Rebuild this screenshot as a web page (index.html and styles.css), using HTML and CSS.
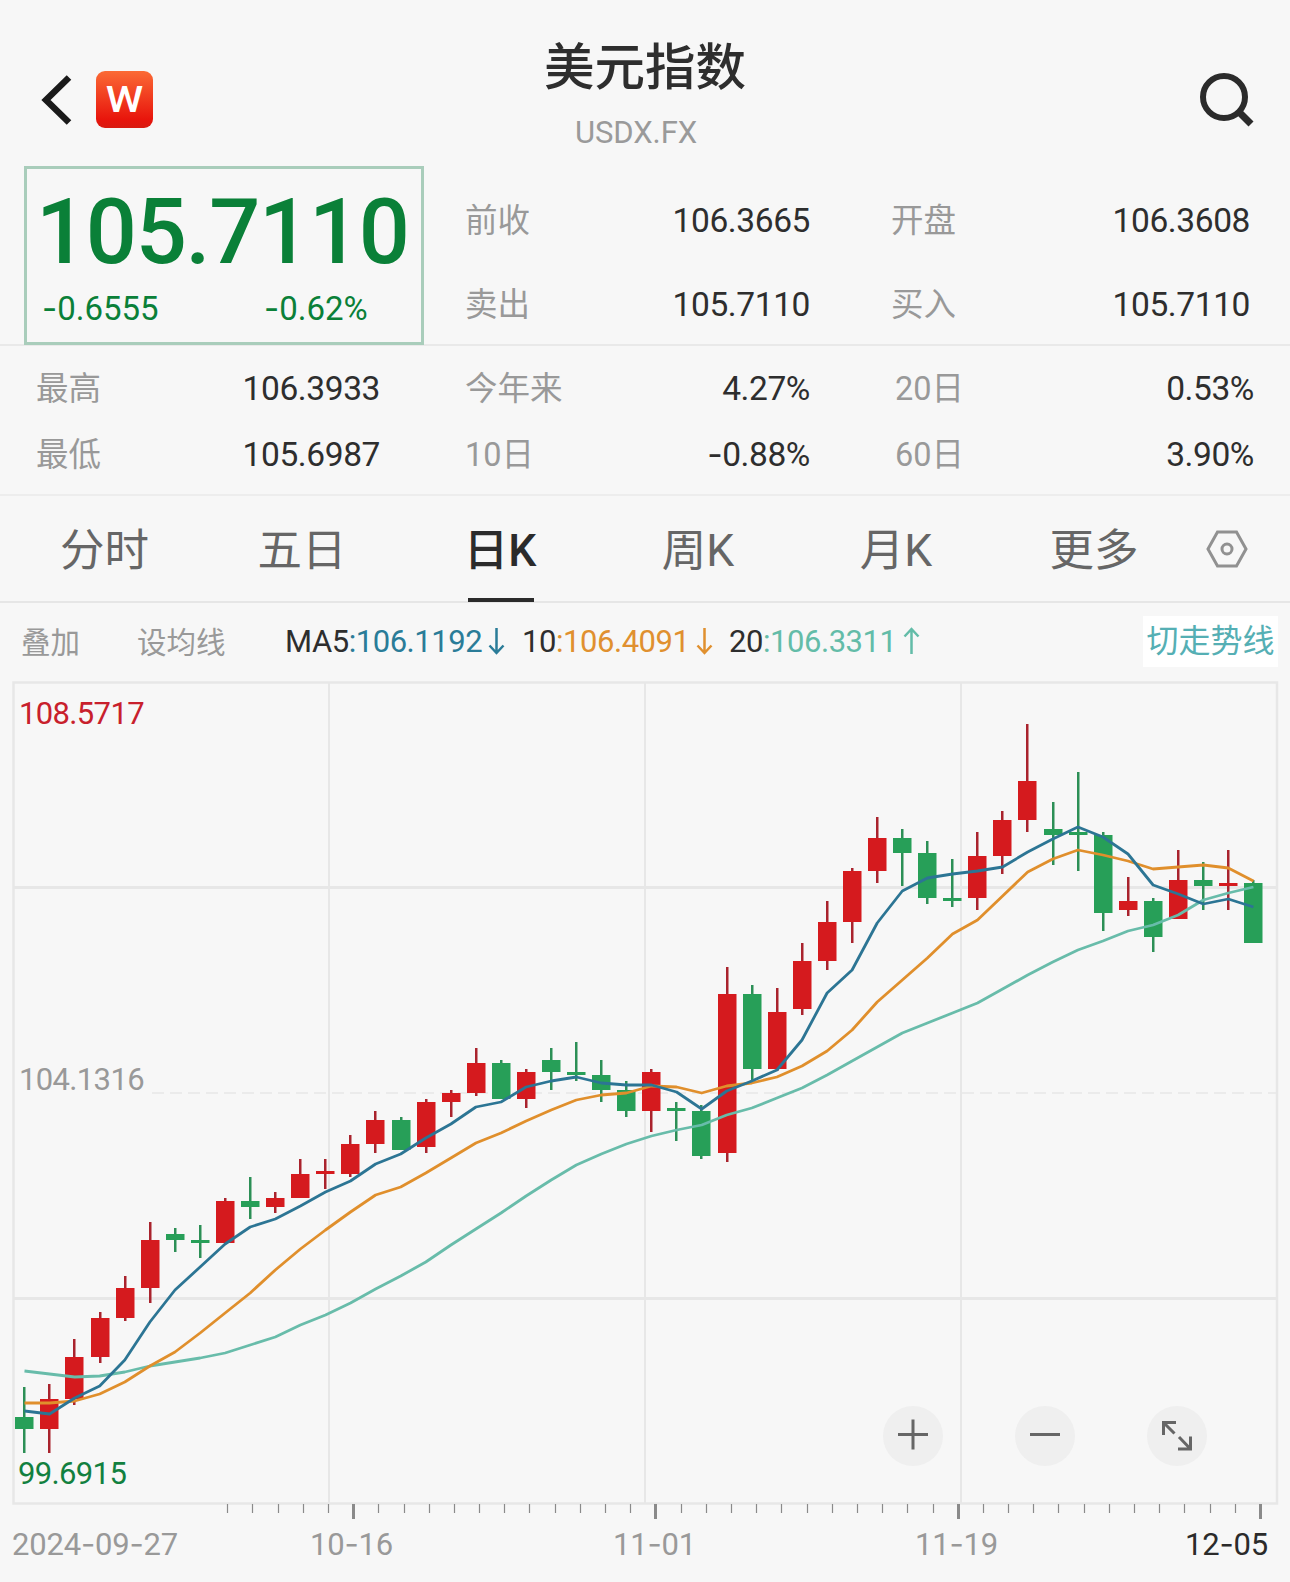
FILE: index.html
```html
<!DOCTYPE html>
<html lang="zh-CN">
<head>
    <meta charset="UTF-8">
    <title>美元指数 USDX.FX</title>
    <link rel="stylesheet" href="styles.css">
</head>
<body>
    <header class="header">
        <div class="header-left">
            <svg class="back" width="34" height="52" viewBox="0 0 34 52"><path d="M30 3.500L7 26l23 22.500" fill="none" stroke="#1a1a1a" stroke-width="6.500"/></svg>
            <div class="logo"><span>W</span></div>
        </div>
        <div class="header-title">
            <h1>美元指数</h1>
            <p>USDX.FX</p>
        </div>
        <svg class="search" width="60" height="60" viewBox="0 0 60 60"><circle cx="27" cy="27" r="21" fill="none" stroke="#2b2b2b" stroke-width="6"/><path d="M42 42l12 12" stroke="#2b2b2b" stroke-width="7"/></svg>
    </header>

    <section class="quote">
        <div class="price-box">
            <div class="price">105.7110</div>
            <div class="change"><span><i class="dash">-</i>0.6555</span><span><i class="dash">-</i>0.62%</span></div>
        </div>
        <div class="quote-grid">
            <span class="label">前收</span><span class="value">106.3665</span>
            <span class="label">开盘</span><span class="value">106.3608</span>
            <span class="label">卖出</span><span class="value">105.7110</span>
            <span class="label">买入</span><span class="value">105.7110</span>
        </div>
    </section>

    <section class="stats">
        <span class="label">最高</span><span class="value">106.3933</span>
        <span class="label">今年来</span><span class="value">4.27%</span>
        <span class="label">20日</span><span class="value">0.53%</span>
        <span class="label">最低</span><span class="value">105.6987</span>
        <span class="label">10日</span><span class="value"><i class="dash">-</i>0.88%</span>
        <span class="label">60日</span><span class="value">3.90%</span>
    </section>

    <nav class="tabs">
        <a class="tab">分时</a>
        <a class="tab">五日</a>
        <a class="tab active">日K</a>
        <a class="tab">周K</a>
        <a class="tab">月K</a>
        <a class="tab">更多</a>
        <a class="settings"><svg width="44" height="40" viewBox="0 0 44 40"><path d="M12.500 3h19L41 20l-9.500 17h-19L3 20z" fill="none" stroke="#919191" stroke-width="3"/><circle cx="22" cy="20" r="5" fill="none" stroke="#919191" stroke-width="3"/></svg></a>
    </nav>

    <div class="ma-bar">
        <span class="tool overlay">叠加</span>
        <span class="tool setting">设均线</span>
        <span class="ma ma5">MA5<b>:106.1192</b><svg width="17" height="28" viewBox="0 0 17 28"><path d="M8.500 1v25M1.500 18.500l7 7.500 7-7.500"/></svg></span>
        <span class="ma ma10">10<b>:106.4091</b><svg width="17" height="28" viewBox="0 0 17 28"><path d="M8.500 1v25M1.500 18.500l7 7.500 7-7.500"/></svg></span>
        <span class="ma ma20">20<b>:106.3311</b><svg width="17" height="28" viewBox="0 0 17 28"><path d="M8.500 27V2M1.500 9.500l7-7.500 7 7.500"/></svg></span>
        <span class="trend-btn">切走势线</span>
    </div>

    <svg class="chart" id="chart" width="1290" height="901" viewBox="0 681 1290 901">
        <g class="grid">
            <path d="M13 887.500H1277M13 1298.500H1277" stroke-width="3"/>
            <path d="M329 682V1503M645 682V1503M961 682V1503" stroke-width="2"/>
            <path d="M152 1093H1277" stroke-width="1.500" stroke-dasharray="12 6"/>
            <path d="M13.500 682.500H1277V1503.500H13.500z" stroke-width="2.500"/>
        </g>
        <g id="candles"></g>
        <g id="lines"></g>
        <g id="ticks"></g>
        <text class="high" x="19" y="724">108.5717</text>
        <text class="mid" x="19" y="1090">104.1316</text>
        <text class="low" x="18" y="1484">99.6915</text>
        <g class="dates">
            <text x="12" y="1555">2024<tspan class="dash">-</tspan>09<tspan class="dash">-</tspan>27</text>
            <text x="310" y="1555">10<tspan class="dash">-</tspan>16</text>
            <text x="613" y="1555">11<tspan class="dash">-</tspan>01</text>
            <text x="915" y="1555">11<tspan class="dash">-</tspan>19</text>
            <text class="today" x="1185" y="1555">12<tspan class="dash">-</tspan>05</text>
        </g>
        <g class="zoom">
            <circle cx="913" cy="1436" r="30"/>
            <path d="M898 1434.500h30M913 1419.500v30"/>
            <circle cx="1045" cy="1436" r="30"/>
            <path d="M1030 1434.500h30"/>
            <circle cx="1177" cy="1436" r="30"/>
            <path d="M1176 1422.500h-12.500v12.500M1163.500 1422.500l11 11M1178 1449h12.500v-12.500M1190.500 1449l-11.500-12"/>
        </g>
    </svg>

    <script src="chart.js"></script>
</body>
</html>
```

FILE: styles.css
```css
* {
    box-sizing: border-box;
}
body {
    margin: 0;
    width: 1290px;
    height: 1582px;
    overflow: hidden;
    background: #f7f7f7;
    color: #2e2e2e;
    font-family: Roboto, "Noto Sans CJK SC", sans-serif;
}
.dash {
    font-family: Inter, sans-serif;
    font-style: normal;
}
.header {
    display: grid;
    grid-template-columns: 300px 1fr 300px;
    height: 166px;
}
.header-left {
    display: flex;
    align-items: center;
    padding: 33px 0 0 39px;
}
.back {
    margin-right: 23px;
}
.logo {
    width: 57px;
    height: 57px;
    border-radius: 9px;
    background: linear-gradient(#fb6a35, #e8150c 85%, #d81a10);
    color: #fff;
    font-size: 37px;
    font-weight: 500;
    line-height: 58px;
    text-align: center;
}
.logo span {
    display: block;
    transform: scaleX(1.15);
}
.header-title {
    text-align: center;
    padding-top: 31px;
}
.header-title h1 {
    margin: 0;
    font-size: 50.5px;
    font-weight: 500;
    line-height: 74px;
}
.header-title p {
    margin: 8px 18px 0 0;
    font-size: 31px;
    line-height: 40px;
    color: #9a9a9a;
    letter-spacing: -0.1px;
}
.search {
    justify-self: end;
    margin: 70px 33px 0 0;
}
.quote {
    display: flex;
    height: 180px;
    border-bottom: 2px solid #e9e9e9;
}
.price-box {
    width: 400px;
    height: 179px;
    margin-left: 24px;
    padding-left: 15px;
    border: 3px solid #a9cdbb;
    color: #0a8038;
}
.price {
    height: 103px;
    margin-left: -6px;
    padding-top: 14px;
    font-size: 90px;
    font-weight: 500;
    line-height: 100px;
    letter-spacing: -1.3px;
}
.change {
    display: grid;
    grid-template-columns: 222px 1fr;
    padding-top: 16px;
    font-size: 33px;
    line-height: 40px;
}
.quote-grid {
    display: grid;
    grid-template-columns: 145px 200px 81px 1fr;
    grid-template-rows: 84px 84px;
    align-items: center;
    flex: 1;
    padding: 12px 40px 0 41px;
}
.label {
    padding-bottom: 5px;
    font-size: 32.5px;
    color: #999;
    white-space: nowrap;
}
.value {
    font-size: 33.5px;
    text-align: right;
    letter-spacing: -0.4px;
}
.quote-grid .label:nth-child(4n+3) {
    padding-left: 81px;
    margin-right: -81px;
}
.stats {
    display: grid;
    grid-template-columns: 143px 201px 84px 346px 84px 1fr;
    grid-template-rows: 66px 66px;
    align-items: center;
    height: 150px;
    padding: 9px 36px 0 36px;
    border-bottom: 2px solid #ededed;
}
.stats .label:nth-child(6n+3) {
    padding-left: 85px;
    margin-right: -85px;
}
.stats .label:nth-child(6n+5) {
    padding-left: 85px;
    margin-right: -85px;
}
.tabs {
    display: grid;
    grid-template-columns: 197px 198px 198px 198px 198px 198px 66px;
    height: 107px;
    padding-left: 6px;
    border-bottom: 2px solid #e6e6e6;
}
.tab {
    display: flex;
    flex-direction: column;
    align-items: center;
    height: 106px;
    padding-top: 2px;
    font-size: 44.5px;
    line-height: 106px;
    color: #666;
}
.tab.active {
    color: #2b2b2b;
    font-weight: 500;
}
.tab.active::after {
    content: "";
    width: 66px;
    height: 4px;
    margin: -6px 0 0 1px;
    background: #2b2b2b;
}
.settings {
    padding-top: 33px;
    margin-left: 12px;
}
.ma-bar {
    display: flex;
    align-items: center;
    height: 78px;
    padding: 0 12px 2px 21px;
    font-size: 31px;
}
.tool {
    padding-bottom: 3px;
    font-size: 29.5px;
    color: #999;
}
.overlay {
    width: 116px;
}
.setting {
    width: 148px;
}
.ma {
    display: flex;
    align-items: center;
    letter-spacing: -0.45px;
}
.ma b {
    font-weight: normal;
}
.ma svg {
    margin-left: 6px;
    fill: none;
    stroke: currentColor;
    stroke-width: 2.5;
}
.ma5 {
    width: 237px;
}
.ma10 {
    width: 207px;
}
.ma5 b, .ma5 svg {
    color: #2a7c98;
}
.ma10 b, .ma10 svg {
    color: #e0902f;
}
.ma20 b, .ma20 svg {
    color: #63bca8;
}
.trend-btn {
    width: 135px;
    height: 51px;
    margin-left: auto;
    background: #fff;
    color: #55afb4;
    font-size: 32px;
    line-height: 51px;
    text-align: center;
}
.chart {
    display: block;
    font-size: 31px;
    letter-spacing: -0.65px;
}
.grid path {
    fill: none;
    stroke: #e7e7e7;
}
.high {
    fill: #c8202c;
}
.mid {
    fill: #999;
}
.low {
    fill: #12803f;
}
.dates {
    fill: #999;
    letter-spacing: -0.2px;
}
.dates .today {
    fill: #2b2b2b;
}
.zoom circle {
    fill: #efefef;
}
.zoom path {
    fill: none;
    stroke: #666;
    stroke-width: 3;
}
.up {
    fill: #d51a1e;
}
.down {
    fill: #279f58;
}
.up .wick {
    fill: #a9232d;
}
.down .wick {
    fill: #2c8f56;
}
.line {
    fill: none;
    stroke-width: 2.8;
    stroke-linejoin: round;
}
.line5 {
    stroke: #2c7594;
}
.line10 {
    stroke: #e08f2c;
}
.line20 {
    stroke: #68bcaa;
}
.tick {
    stroke: #8a8a8a;
    stroke-width: 1.2;
}
.tick.major {
    stroke-width: 3;
}
```

FILE: chart.js
```javascript
// [direction, high, body top, body bottom, low]
const candles = [
    [-1, 1387, 1417, 1429, 1453], [1, 1384, 1399, 1429, 1453], [1, 1339, 1357, 1399, 1405], [1, 1312, 1318, 1357, 1363],
    [1, 1276, 1288, 1318, 1321], [1, 1222, 1240, 1288, 1303], [-1, 1228, 1234, 1240, 1252], [-1, 1225, 1240, 1243, 1258],
    [1, 1198, 1201, 1243, 1243], [-1, 1177, 1201, 1207, 1219], [1, 1192, 1198, 1207, 1213], [1, 1159, 1174, 1198, 1198],
    [1, 1159, 1171, 1174, 1189], [1, 1135, 1144, 1174, 1177], [1, 1111, 1120, 1144, 1153], [-1, 1117, 1120, 1150, 1150],
    [1, 1099, 1102, 1147, 1153], [1, 1090, 1093, 1102, 1117], [1, 1048, 1063, 1093, 1096], [-1, 1060, 1063, 1099, 1099],
    [1, 1069, 1072, 1099, 1108], [-1, 1048, 1060, 1072, 1090], [-1, 1042, 1072, 1075, 1081], [-1, 1060, 1075, 1090, 1102],
    [-1, 1081, 1090, 1111, 1117], [1, 1069, 1072, 1111, 1132], [-1, 1102, 1108, 1111, 1141], [-1, 1105, 1111, 1156, 1159],
    [1, 967, 994, 1153, 1162], [-1, 985, 994, 1069, 1080], [1, 988, 1012, 1069, 1071], [1, 943, 961, 1009, 1015],
    [1, 901, 922, 961, 970], [1, 868, 871, 922, 943], [1, 817, 838, 871, 883], [-1, 829, 838, 853, 886],
    [-1, 841, 853, 898, 904], [-1, 859, 898, 901, 907], [1, 832, 856, 898, 910], [1, 811, 820, 856, 874],
    [1, 724, 781, 820, 832], [-1, 802, 829, 835, 865], [-1, 772, 832, 835, 871], [-1, 832, 835, 913, 931],
    [1, 877, 901, 910, 916], [-1, 898, 901, 937, 952], [1, 850, 880, 919, 919], [-1, 862, 880, 886, 910],
    [1, 850, 883, 886, 910], [-1, 880, 883, 943, 943]
];

const ma = {
    5: [1411, 1414, 1398, 1386, 1360, 1322, 1290, 1267, 1244, 1227, 1219, 1206, 1192, 1181, 1164, 1154, 1138, 1124, 1107, 1102, 1087, 1081, 1077, 1083, 1085, 1085, 1092, 1109, 1091, 1081, 1070, 1040, 993, 970, 923, 891, 878, 874, 871, 867, 852, 839, 827, 837, 854, 885, 894, 904, 899, 907],
    10: [1403, 1403, 1401, 1394, 1382, 1366, 1352, 1333, 1313, 1293, 1270, 1249, 1230, 1212, 1195, 1187, 1173, 1158, 1143, 1133, 1121, 1110, 1100, 1095, 1093, 1086, 1087, 1093, 1086, 1083, 1077, 1066, 1051, 1030, 1002, 980, 958, 934, 920, 896, 872, 859, 850, 855, 861, 869, 867, 865, 868, 881],
    20: [1371, 1374, 1377, 1376, 1372, 1366, 1362, 1358, 1353, 1345, 1337, 1325, 1315, 1303, 1289, 1276, 1262, 1245, 1229, 1213, 1196, 1180, 1165, 1154, 1144, 1136, 1130, 1125, 1115, 1108, 1098, 1088, 1075, 1061, 1047, 1033, 1023, 1013, 1003, 989, 975, 962, 950, 941, 931, 925, 915, 900, 893, 887]
};

const step = 25.08;
const x = i => 24.5 + i * step;

document.getElementById('candles').innerHTML = candles.map(([dir, high, top, bottom, low], i) => {
    const left = Math.round(x(i) - 9.2);
    return `<g class="${dir > 0 ? 'up' : 'down'}">
        <rect class="wick" x="${left + 8}" y="${high}" width="2.5" height="${low - high}"/>
        <rect x="${left}" y="${top}" width="18.500" height="${bottom - top}"/>
    </g>`;
}).join('');

document.getElementById('lines').innerHTML = [20, 10, 5].map(n =>
    `<polyline class="line line${n}" points="${ma[n].map((y, i) => x(i).toFixed(1) + ',' + y).join(' ')}"/>`
).join('');

let ticks = '';
for (let k = 0; k <= 41; k++) {
    const tx = Math.round(1260 - k * 25.19) + 0.5;
    const major = k % 12 === 0;
    ticks += `<path class="tick${major ? ' major' : ''}" d="M${tx} 1504v${major ? 15 : 9}"/>`;
}
document.getElementById('ticks').innerHTML = ticks;
```
